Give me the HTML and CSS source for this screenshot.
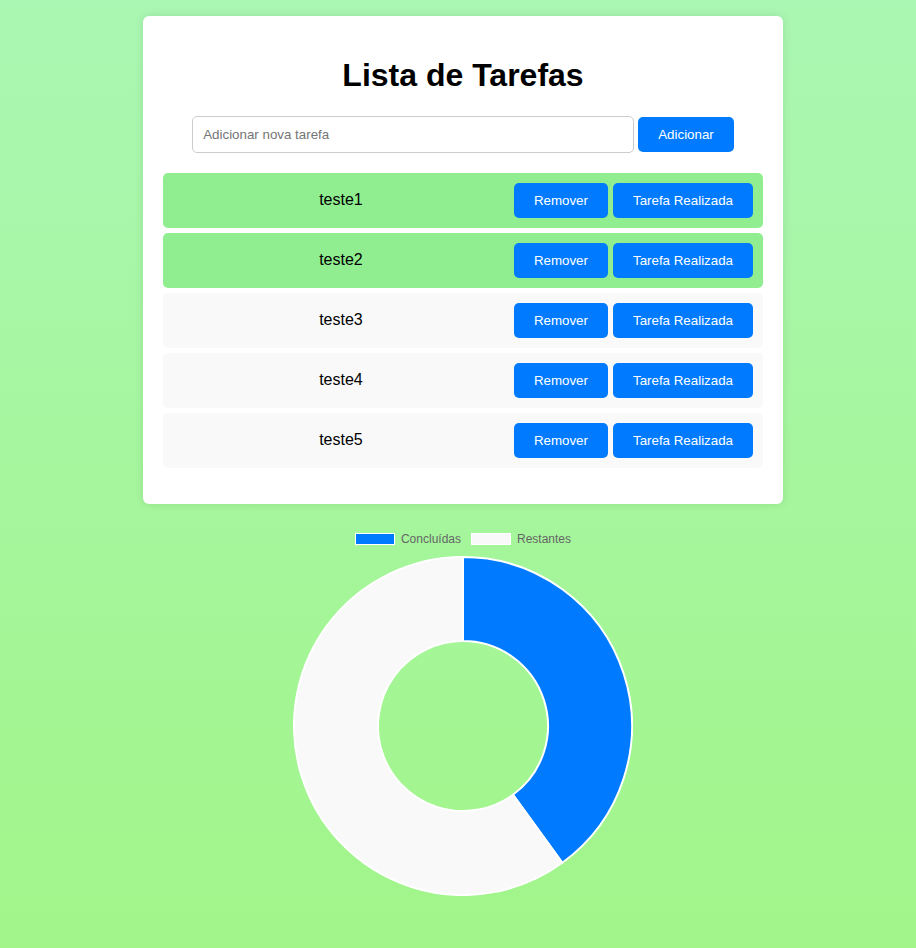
FILE: index.html
```html
<!DOCTYPE html>
<html lang="pt">
<head>
<meta charset="utf-8">
<title>Lista de Tarefas</title>
<link rel="stylesheet" href="styles.css">
</head>
<body>
<div class="page">
  <div class="card">
    <h1 class="title">Lista de Tarefas</h1>
    <div class="add-row">
      <input class="add-input" type="text" placeholder="Adicionar nova tarefa">
      <button class="btn">Adicionar</button>
    </div>
    <ul class="tasks">
      <li class="task done"><span class="task-name">teste1</span><button class="btn task-btn">Remover</button><button class="btn task-btn">Tarefa Realizada</button></li>
      <li class="task done"><span class="task-name">teste2</span><button class="btn task-btn">Remover</button><button class="btn task-btn">Tarefa Realizada</button></li>
      <li class="task"><span class="task-name">teste3</span><button class="btn task-btn">Remover</button><button class="btn task-btn">Tarefa Realizada</button></li>
      <li class="task"><span class="task-name">teste4</span><button class="btn task-btn">Remover</button><button class="btn task-btn">Tarefa Realizada</button></li>
      <li class="task"><span class="task-name">teste5</span><button class="btn task-btn">Remover</button><button class="btn task-btn">Tarefa Realizada</button></li>
    </ul>
  </div>
  <div class="chart">
    <div class="legend">
      <span class="legend-item"><span class="legend-box box-done"></span>Concluídas</span>
      <span class="legend-item"><span class="legend-box box-rest"></span>Restantes</span>
    </div>
    <svg class="donut" width="340" height="340" viewBox="0 0 340 340">
      <path fill="#007bff" stroke="#ffffff" stroke-width="2" d="M170,1 A169,169 0 0 1 269.33,306.72 L219.96,238.77 A85,85 0 0 0 170,85 Z"/>
      <path fill="#f9f9f9" stroke="#ffffff" stroke-width="2" d="M269.33,306.72 A169,169 0 1 1 170,1 L170,85 A85,85 0 1 0 219.96,238.77 Z"/>
    </svg>
  </div>
</div>
</body>
</html>
```

FILE: styles.css
```css
html {
  background: #a4f59a;
}
body {
  margin: 0;
  min-height: 948px;
  background: linear-gradient(to bottom, #aaf7b3 0%, #a1f589 100%);
  font-family: "Liberation Sans", Arial, sans-serif;
}
.page {
  padding: 16px 0 0 10px;
  display: flex;
  flex-direction: column;
  align-items: center;
}
.card {
  width: 600px;
  padding: 20px;
  background: #ffffff;
  border-radius: 6px;
  box-shadow: 0 0 10px rgba(0, 0, 0, 0.1);
}
.title {
  margin: 21.44px 0;
  font-size: 32px;
  font-weight: bold;
  text-align: center;
  color: #000;
}
.add-row {
  display: flex;
  justify-content: center;
  align-items: center;
  gap: 4px;
  margin-bottom: 20px;
}
.add-input {
  width: 420px;
  padding: 10px;
  border: 1px solid #ccc;
  border-radius: 5px;
  font: 13.333px "Liberation Sans", Arial, sans-serif;
  color: #000;
  outline: none;
}
.add-input::placeholder {
  color: #757575;
}
.btn {
  padding: 10px 20px;
  border: none;
  border-radius: 5px;
  background: #007bff;
  color: #fff;
  font: 13.333px "Liberation Sans", Arial, sans-serif;
  line-height: 15px;
  cursor: pointer;
}
.tasks {
  list-style: none;
  margin: 0 0 16px;
  padding: 0;
  display: flex;
  flex-direction: column;
  gap: 5px;
}
.task {
  display: flex;
  align-items: center;
  padding: 10px;
  background: #f9f9f9;
  border-radius: 5px;
}
.task.done {
  background: #90ee90;
}
.task-name {
  flex: 1;
  text-align: center;
  font-size: 16px;
  color: #000;
}
.task-btn {
  margin-left: 5px;
}
.chart {
  margin-top: 29px;
  display: flex;
  flex-direction: column;
  align-items: center;
}
.legend {
  display: flex;
  gap: 10px;
  height: 12px;
  margin-bottom: 11px;
  font-size: 12px;
  color: #666;
}
.legend-item {
  display: flex;
  align-items: center;
  gap: 6px;
  line-height: 12px;
}
.legend-box {
  width: 38px;
  height: 10px;
  border: 1px solid #fff;
}
.box-done {
  background: #007bff;
}
.box-rest {
  background: #f9f9f9;
}
.donut {
  display: block;
}
```
